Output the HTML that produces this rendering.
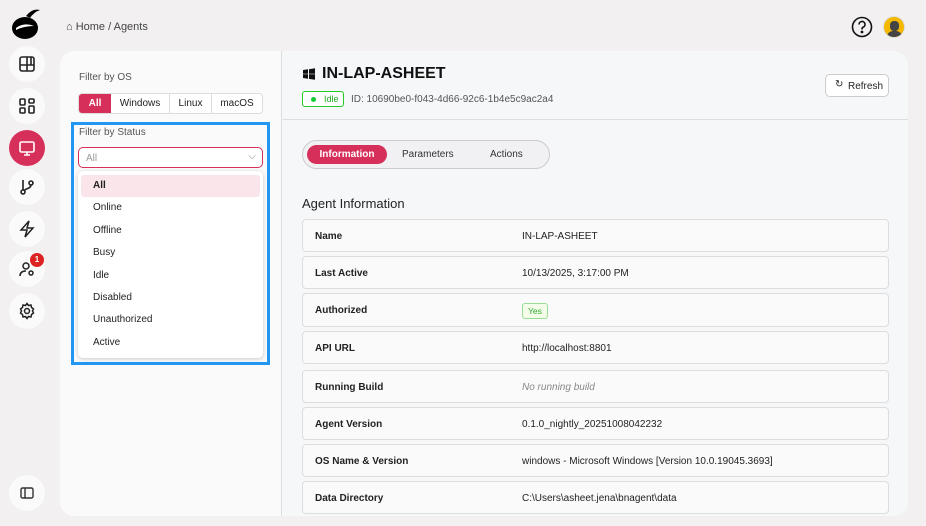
<!DOCTYPE html>
<html><head><meta charset="utf-8"><style>
*{box-sizing:border-box;margin:0;padding:0}
body{width:926px;height:526px;background:#f2f0f0;font-family:"Liberation Sans",sans-serif;color:#222;position:relative;overflow:hidden;font-size:10px}
.a{position:absolute}
.ic{position:absolute;left:9px;width:36px;height:36px;border-radius:50%;background:#fafafa;display:flex;align-items:center;justify-content:center}
.card{left:60px;top:51px;width:848px;height:465px;border-radius:14px;overflow:hidden;background:#f6f7f9}
.left{left:0;top:0;width:222px;height:465px;background:#fafafa;border-right:1px solid #ddd}
.row{position:absolute;left:242px;width:587px;height:33px;border:1px solid #ddd;border-radius:4px;background:#fafafa;font-size:10px}
.row b{position:absolute;left:12px;top:11px;font-weight:bold}
.row span{position:absolute;left:219px;top:11px}
.dd div{height:22.4px;padding-left:12px;line-height:22px;font-size:10px}
</style></head><body>
<svg class="a" style="left:10px;top:6px" width="32" height="34" viewBox="0 0 32 34"><ellipse cx="15" cy="22" rx="13" ry="11" fill="#000"/><path d="M16 10 Q22 2 30 4 Q24 6 20 12Z" fill="#000"/><path d="M6 22 Q14 16 24 20 Q14 20 6 24Z" fill="#fff"/></svg>
<div class="ic" style="top:46px"><svg width="18" height="18" viewBox="0 0 18 18" fill="none" stroke="#222" stroke-width="1.6"><rect x="2" y="2" width="14" height="14" rx="2"/><path d="M2 10h14M9 2v14M13 2v8"/></svg></div>
<div class="ic" style="top:88px"><svg width="18" height="18" viewBox="0 0 18 18" fill="none" stroke="#222" stroke-width="1.6"><rect x="2" y="2" width="5" height="6" rx="1"/><rect x="11" y="2" width="5" height="4" rx="1"/><rect x="2" y="11" width="5" height="5" rx="1"/><rect x="11" y="9" width="5" height="7" rx="1"/></svg></div>
<div class="ic" style="top:130px;background:#d6305a"><svg width="18" height="18" viewBox="0 0 18 18" fill="none" stroke="#fff" stroke-width="1.6"><rect x="2" y="3" width="14" height="10" rx="1.5"/><path d="M6 16h6M9 13v3"/></svg></div>
<div class="ic" style="top:169px"><svg width="18" height="18" viewBox="0 0 18 18" fill="none" stroke="#222" stroke-width="1.6"><circle cx="5" cy="14" r="2"/><circle cx="13" cy="5" r="2"/><path d="M5 2v10M13 7c0 4-6 3-7 6"/></svg></div>
<div class="ic" style="top:211px"><svg width="18" height="18" viewBox="0 0 18 18" fill="none" stroke="#222" stroke-width="1.5"><path d="M11 1L3 10h6l-2 7 8-9H9z"/></svg></div>
<div class="ic" style="top:251px"><svg width="18" height="18" viewBox="0 0 18 18" fill="none" stroke="#222" stroke-width="1.5"><circle cx="8" cy="6" r="3"/><path d="M2 16c0-4 3-5 6-5"/><circle cx="13" cy="13" r="2"/></svg></div>
<div class="a" style="left:30px;top:253px;width:14px;height:14px;border-radius:50%;background:#d22;color:#fff;font-size:8px;text-align:center;line-height:14px;font-weight:bold">1</div>
<div class="ic" style="top:293px"><svg width="18" height="18" viewBox="0 0 18 18" fill="none" stroke="#222" stroke-width="1.5"><circle cx="9" cy="9" r="2.5"/><path d="M9 1.5l1.5 2 2.5-.5.5 2.5 2 1.5-1 2 1 2-2 1.5-.5 2.5-2.5-.5L9 16.5l-1.5-2-2.5.5-.5-2.5-2-1.5 1-2-1-2 2-1.5.5-2.5 2.5.5z"/></svg></div>
<div class="ic" style="top:475px"><svg width="14" height="12" viewBox="0 0 14 12" fill="none" stroke="#333" stroke-width="1.4"><rect x="1" y="1" width="12" height="10" rx="1.5"/><path d="M5 1v10"/></svg></div>
<div class="a" style="left:66px;top:21px;font-size:11px;color:#444">⌂ Home / Agents</div>
<svg class="a" style="left:851px;top:16px" width="22" height="22" viewBox="0 0 22 22" fill="none" stroke="#111" stroke-width="1.6"><circle cx="11" cy="11" r="9.5"/><path d="M8 8.5a3 3 0 1 1 4 2.8c-1 .4-1 1-1 2.2"/><circle cx="11" cy="16" r=".6" fill="#111"/></svg>
<div class="a" style="left:883px;top:16px;width:22px;height:22px;border-radius:50%;background:#f5b800;border:1px solid #ddd;overflow:hidden"><div class="a" style="left:6px;top:4px;width:9px;height:10px;border-radius:4px;background:#444"></div><div class="a" style="left:3px;top:14px;width:15px;height:9px;border-radius:6px 6px 0 0;background:#444"></div></div>
<div class="a card">
 <div class="a left">
  <div class="a" style="left:19px;top:21px;color:#555;font-size:10px">Filter by OS</div>
  <div class="a" style="left:18px;top:42px;width:185px;height:21px;border:1px solid #ddd;border-radius:4px;display:flex;font-size:10px;background:#fff">
   <div style="width:32px;background:#d6305a;color:#fff;text-align:center;line-height:19px;border-radius:3px 0 0 3px;font-weight:bold">All</div>
   <div style="width:59px;text-align:center;line-height:19px;border-right:1px solid #ddd">Windows</div>
   <div style="width:42px;text-align:center;line-height:19px;border-right:1px solid #ddd">Linux</div>
   <div style="flex:1;text-align:center;line-height:19px">macOS</div>
  </div>
  <div class="a" style="left:11px;top:71px;width:199px;height:243px;border:3px solid #2196f3"></div>
  <div class="a" style="left:19px;top:76px;color:#555;font-size:10px">Filter by Status</div>
  <div class="a" style="left:18px;top:96px;width:185px;height:21px;border:1.5px solid #d6305a;border-radius:5px;background:#fff;color:#999;font-size:10px;padding:5px 0 0 7px">All<span style="position:absolute;right:6px;top:3px;color:#888">⌵</span></div>
  <div class="a dd" style="left:18px;top:120px;width:185px;height:187px;background:#fff;border-radius:5px;box-shadow:0 1px 4px rgba(0,0,0,.2);padding:4px 3px">
   <div style="background:#fae6ea;border-radius:3px;font-weight:bold">All</div>
   <div>Online</div><div>Offline</div><div>Busy</div><div>Idle</div><div>Disabled</div><div>Unauthorized</div><div>Active</div>
  </div>
 </div>
 <div class="a" style="left:223px;top:68px;width:625px;height:1px;background:#ddd"></div>
 <svg class="a" style="left:243px;top:17px" width="12" height="12" viewBox="0 0 12 12" fill="#111"><path d="M0 2l5-.7V5.7H0zM6 1.2L12 .3V5.7H6zM0 6.3h5v4.4L0 10zM6 6.3h6v5.4l-6-.8z"/></svg>
 <div class="a" style="left:262px;top:14px;font-size:16px;font-weight:bold;color:#111">IN-LAP-ASHEET</div>
 <div class="a" style="left:242px;top:40px;width:42px;height:16px;border:1px solid #2c2;border-radius:3px;background:#fff;font-size:9px;color:#2a2;padding:2px 0 0 21px">Idle<div class="a" style="left:8px;top:5px;width:5px;height:5px;border-radius:50%;background:#1c3"></div></div>
 <div class="a" style="left:291px;top:43px;font-size:10px;color:#555">ID: 10690be0-f043-4d66-92c6-1b4e5c9ac2a4</div>
 <div class="a" style="left:765px;top:23px;width:64px;height:23px;border:1px solid #ccc;border-radius:5px;background:#fff;font-size:10px;padding:6px 0 0 22px">Refresh<span class="a" style="left:9px;top:4px;font-size:10px">↻</span></div>
 <div class="a" style="left:242px;top:89px;width:248px;height:29px;border:1px solid #ccc;border-radius:15px;background:#f1f1f3;font-size:10px">
  <div class="a" style="left:4px;top:4px;width:80px;height:19px;border-radius:10px;background:#d6305a;color:#fff;font-weight:bold;text-align:center;line-height:19px">Information</div>
  <div class="a" style="left:99px;top:8px;color:#333">Parameters</div>
  <div class="a" style="left:187px;top:8px;color:#333">Actions</div>
 </div>
 <div class="a" style="left:242px;top:145px;font-size:13px;color:#222">Agent Information</div>
 <div class="row" style="top:168px"><b>Name</b><span>IN-LAP-ASHEET</span></div>
 <div class="row" style="top:205px"><b>Last Active</b><span>10/13/2025, 3:17:00 PM</span></div>
 <div class="row" style="top:242px;height:34px"><b>Authorized</b><span style="top:9px;border:1px solid #9d9;background:#f3fde9;color:#3a3;padding:2px 5px;border-radius:3px;font-size:8.5px">Yes</span></div>
 <div class="row" style="top:280px"><b>API URL</b><span>http://localhost:8801</span></div>
 <div class="row" style="top:319px"><b>Running Build</b><span style="color:#888;font-style:italic">No running build</span></div>
 <div class="row" style="top:356px"><b>Agent Version</b><span>0.1.0_nightly_20251008042232</span></div>
 <div class="row" style="top:393px"><b>OS Name &amp; Version</b><span>windows - Microsoft Windows [Version 10.0.19045.3693]</span></div>
 <div class="row" style="top:430px"><b>Data Directory</b><span>C:\Users\asheet.jena\bnagent\data</span></div>
</div>
</body></html>
